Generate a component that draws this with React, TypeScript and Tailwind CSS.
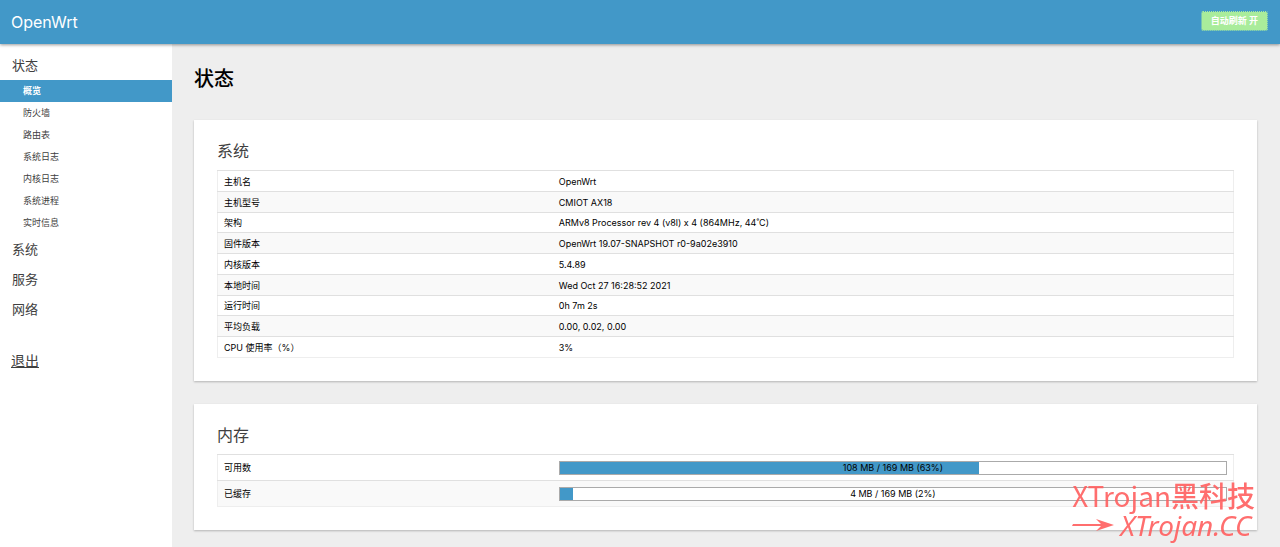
import React from "react";
import clsx from "clsx";

const statusLinks = [
  "概览",
  "防火墙",
  "路由表",
  "系统日志",
  "内核日志",
  "系统进程",
  "实时信息",
];

const sections = ["系统", "服务", "网络"];

const systemRows = [
  ["主机名", "OpenWrt"],
  ["主机型号", "CMIOT AX18"],
  ["架构", "ARMv8 Processor rev 4 (v8l) x 4 (864MHz, 44˚C)"],
  ["固件版本", "OpenWrt 19.07-SNAPSHOT r0-9a02e3910"],
  ["内核版本", "5.4.89"],
  ["本地时间", "Wed Oct 27 16:28:52 2021"],
  ["运行时间", "0h 7m 2s"],
  ["平均负载", "0.00, 0.02, 0.00"],
  ["CPU 使用率（%）", "3%"],
];

const memoryRows = [
  { label: "可用数", text: "108 MB / 169 MB (63%)", percent: 63 },
  { label: "已缓存", text: "4 MB / 169 MB (2%)", percent: 2 },
];

function Sidebar() {
  return (
    <nav className="w-[172px] shrink-0 bg-white pt-1.5 text-[#404040]">
      <a href="#status" className="block px-3 text-[13px] leading-[30px]">
        状态
      </a>
      <ul>
        {statusLinks.map((name, i) => (
          <li key={name}>
            <a
              href={`#${name}`}
              className={clsx(
                "block pl-[23px] text-[9px] leading-[22px]",
                i === 0 && "bg-[#4298c8] font-bold text-white",
              )}
            >
              {name}
            </a>
          </li>
        ))}
      </ul>
      {sections.map((name) => (
        <a
          key={name}
          href={`#${name}`}
          className="block px-3 text-[13px] leading-[30px]"
        >
          {name}
        </a>
      ))}
      <a
        href="#logout"
        className="mt-[22px] block px-[11px] text-sm leading-[30px] underline"
      >
        退出
      </a>
    </nav>
  );
}

function Card({
  title,
  children,
}: {
  title: string;
  children: React.ReactNode;
}) {
  return (
    <section className="bg-white px-[23px] pt-5 pb-[23px] shadow-[0_1px_2px_rgba(0,0,0,0.25)]">
      <h2 className="mb-2 text-base leading-[22px] text-[#404040]">{title}</h2>
      {children}
    </section>
  );
}

function Progress({ text, percent }: { text: string; percent: number }) {
  return (
    <div
      role="progressbar"
      aria-label={text}
      aria-valuenow={percent}
      className="relative h-3.5 border border-[#aaa] bg-white"
    >
      <div className="h-full bg-[#4298c8]" style={{ width: `${percent}%` }} />
      <span className="absolute inset-0 text-center leading-3">{text}</span>
    </div>
  );
}

function Watermark() {
  return (
    <div className="pointer-events-none fixed right-[25px] bottom-2 flex flex-col font-['Noto_Sans_CJK_SC',sans-serif] text-[#ff5f5f] opacity-90">
      <span className="text-[28px] leading-8 whitespace-nowrap">
        XTrojan<span className="font-medium">黑科技</span>
      </span>
      <span className="flex items-center gap-1.5 text-[28px] leading-7 italic">
        <svg viewBox="0 0 42 14" className="h-3.5 w-[42px]" fill="currentColor">
          <path d="M1 6h28L24 1l18 6-18 6 5-5H0z" />
        </svg>
        <span className="font-['Noto_Sans',sans-serif]">XTrojan.CC</span>
      </span>
    </div>
  );
}

export default function App() {
  return (
    <div className="flex min-h-screen flex-col bg-[#eee] font-['Inter','Noto_Sans_CJK_SC',sans-serif]">
      <header className="relative z-10 flex h-11 items-center justify-between bg-[#4298c8] pr-3 pb-0.5 pl-[11px] text-white shadow-[0_1px_3px_rgba(0,0,0,0.4)]">
        <a href="#home" className="pt-0.5 text-base">
          OpenWrt
        </a>
        <button
          type="button"
          className="h-5 rounded-xs border border-dotted border-[#a9ec9b] bg-[#a9ec9b] bg-clip-padding px-[9px] text-[9px] font-bold"
        >
          自动刷新 开
        </button>
      </header>
      <div className="flex flex-1">
        <Sidebar />
        <main className="flex min-w-0 flex-1 flex-col gap-[23px] pt-[21px] pr-[23px] pb-[17px] pl-[22px]">
          <h1 className="mb-1 text-xl leading-7 font-medium text-black">
            状态
          </h1>
          <Card title="系统">
            <table className="h-[188px] w-full border-collapse border border-[#eee] text-[9px] leading-3">
              <tbody>
                {systemRows.map(([label, value]) => (
                  <tr
                    key={label}
                    className="border-t border-[#e0e0e0] even:bg-[#f9f9f9]"
                  >
                    <th className="w-[33%] pt-0.5 pl-1.5 text-left font-normal">
                      {label}
                    </th>
                    <td className="pt-0.5 pl-1.5">{value}</td>
                  </tr>
                ))}
              </tbody>
            </table>
          </Card>
          <Card title="内存">
            <table className="w-full border-collapse border border-[#eee] text-[9px] leading-3">
              <tbody>
                {memoryRows.map((row) => (
                  <tr
                    key={row.label}
                    className="border-t border-[#e0e0e0] even:bg-[#f9f9f9]"
                  >
                    <th className="w-[33%] pl-1.5 text-left font-normal">
                      {row.label}
                    </th>
                    <td className="px-1.5 pt-1.5 pb-[5px]">
                      <Progress text={row.text} percent={row.percent} />
                    </td>
                  </tr>
                ))}
              </tbody>
            </table>
          </Card>
        </main>
      </div>
      <Watermark />
    </div>
  );
}
